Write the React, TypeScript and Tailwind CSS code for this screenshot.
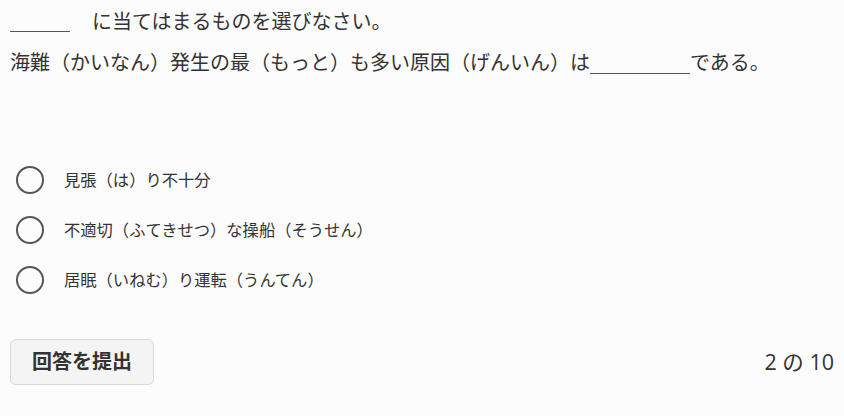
import React from "react";

const options = [
  "見張（は）り不十分",
  "不適切（ふてきせつ）な操船（そうせん）",
  "居眠（いねむ）り運転（うんてん）",
];

export default function App() {
  return (
    <div
      className="min-h-[416px] w-[844px] bg-[#fcfcfc] text-[#333] px-[10px] pt-[6px]"
      style={{ fontFamily: '"Open Sans", "Noto Sans CJK JP", sans-serif' }}
    >
      <p className="text-[20px] leading-[32px] flex items-center">
        <span className="inline-block w-[60px] h-[20px] border-b border-[#555] mr-[22px]" />
        に当てはまるものを選びなさい。
      </p>
      <p className="text-[20px] leading-[32px] mt-[9px] flex items-center">
        海難（かいなん）発生の最（もっと）も多い原因（げんいん）は
        <span className="inline-block w-[100px] h-[22px] border-b border-[#555]" />
        である。
      </p>

      <div className="mt-[87px] flex flex-col gap-[22px] pl-[6px]">
        {options.map((o) => (
          <label key={o} className="flex items-center gap-[20px] h-[28px] cursor-pointer">
            <span className="w-[28px] h-[28px] rounded-full border-2 border-[#555] shrink-0" />
            <span className="text-[16.3px]">{o}</span>
          </label>
        ))}
      </div>

      <div className="mt-[45px] flex items-center justify-between">
        <button className="h-[46px] px-[21px] rounded-[6px] border border-[#d9d9d9] bg-[#f4f4f4] text-[20px] font-bold text-[#333]">
          回答を提出
        </button>
        <span className="text-[21.5px]">2 の 10</span>
      </div>
    </div>
  );
}
